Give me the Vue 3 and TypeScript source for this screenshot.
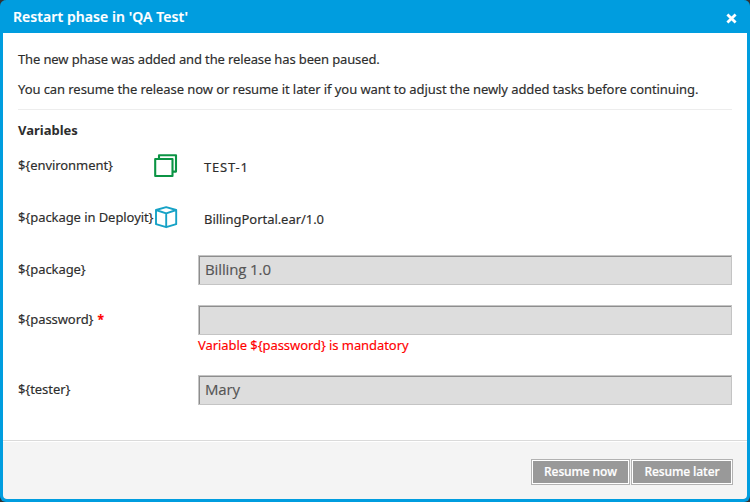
<script setup lang="ts">
import { ref } from 'vue'

interface Variable {
  name: string
  value: string
  kind: 'environment' | 'package' | 'text'
  required?: boolean
  error?: string
}

const variables = ref<Variable[]>([
  { name: 'environment', value: 'TEST-1', kind: 'environment' },
  { name: 'package in Deployit', value: 'BillingPortal.ear/1.0', kind: 'package' },
  { name: 'package', value: 'Billing 1.0', kind: 'text' },
  { name: 'password', value: '', kind: 'text', required: true, error: 'Variable ${password} is mandatory' },
  { name: 'tester', value: 'Mary', kind: 'text' },
])
</script>

<template>
  <section class="dialog" role="dialog">
    <header class="head">
      <h1>Restart phase in 'QA Test'</h1>
      <button class="close" aria-label="Close">
        <svg width="11" height="11" viewBox="0 0 11 11"><path d="M1.4 1.4 9.6 9.6M9.6 1.4 1.4 9.6" stroke="#fff" stroke-width="2.8" /></svg>
      </button>
    </header>
    <main class="body">
      <p class="first">The new phase was added and the release has been paused.</p>
      <p class="second">You can resume the release now or resume it later if you want to adjust the newly added tasks before continuing.</p>
      <hr />
      <h2>Variables</h2>
      <div v-for="v in variables" :key="v.name" class="row" :class="[v.kind, { invalid: v.error }]">
        <label>${{ '{' + v.name + '}' }}<b v-if="v.required">*</b></label>
        <svg v-if="v.kind === 'environment'" class="icon" width="24" height="24" viewBox="0 0 24 24" fill="none" stroke="#0b9444" stroke-width="2.1" stroke-linejoin="round">
          <path d="M5 5V1.3H22V17.6H18.5" />
          <rect x="1.2" y="5" width="17.3" height="17" />
        </svg>
        <svg v-else-if="v.kind === 'package'" class="icon" width="24" height="24" viewBox="0 0 24 24" fill="none" stroke="#16a2c6" stroke-width="1.9" stroke-linejoin="round">
          <path d="M12.2 1.2 22.2 4V18.2L12.2 21.2 2 18.2V4ZM2 4 12.2 7.4 22.2 4M12.2 7.4V21.2" />
        </svg>
        <div class="value">
          <input v-if="v.kind === 'text'" v-model="v.value" disabled />
          <span v-else>{{ v.value }}</span>
          <p v-if="v.error" class="error">{{ v.error }}</p>
        </div>
      </div>
    </main>
    <footer class="foot">
      <button class="btn now">Resume now</button>
      <button class="btn later">Resume later</button>
    </footer>
  </section>
</template>

<style>
body { margin: 0; background: #333; }
</style>

<style scoped>
.dialog {
  box-sizing: border-box;
  width: 750px;
  height: 502px;
  border: 3px solid #009ddf;
  border-top: 0;
  border-radius: 6px;
  background: #009ddf;
  display: flex;
  flex-direction: column;
  font: 13px/20px "Noto Sans", "Open Sans", sans-serif;
  color: #2d2d2d;
  -webkit-text-stroke: 0.15px currentColor;
  overflow: hidden;
}
p, h1, h2 { margin: 0; white-space: nowrap; }
.head {
  height: 33px;
  display: flex;
  justify-content: space-between;
  align-items: center;
  padding: 0 10px;
}
h1 { font-size: 14px; line-height: 20px; font-weight: 600; color: #fff; letter-spacing: 0.07px; }
.close { border: 0; padding: 4px 0 0; background: none; line-height: 0; }
.body {
  flex: 1;
  background: #fff;
  padding: 16px 15px 0;
}
.first { letter-spacing: -0.13px; }
.second { margin-top: 10px; letter-spacing: -0.075px; }
hr { border: 0; height: 1px; background: #ededed; margin: 10px 0; }
h2 { font-size: 13px; line-height: 20px; font-weight: 700; -webkit-text-stroke: 0; }
.row {
  display: grid;
  grid-template-columns: 136px 44px 1fr;
}
h2 + .row { margin-top: 15px; }
.environment { height: 52px; }
.package { height: 48px; }
.text { height: 50px; }
.invalid { height: 70px; }
label { grid-column: 1; white-space: nowrap; letter-spacing: -0.07px; }
label b { color: #f00; margin-left: 4px; font-size: 12px; font-weight: 700; }
.icon { grid-column: 2; margin-top: -1px; }
.value { grid-column: 3; }
.environment .value { padding: 2px 0 0 6px; letter-spacing: 0.8px; }
.package .value { padding: 2px 0 0 6px; letter-spacing: -0.05px; }
.text label { padding-top: 4px; }
input {
  box-sizing: border-box;
  display: block;
  width: 534px;
  height: 30px;
  padding: 0 6px 2px;
  border: 1px solid #c4c4c4;
  border-radius: 0;
  box-shadow: inset 1px 1px 0 #8d8d8d;
  background: #ddd;
  color: #555;
  font: 15px "Open Sans", sans-serif;
  letter-spacing: -0.12px;
}
.error { color: #f00; letter-spacing: -0.07px; }
.foot {
  height: 59px;
  box-sizing: border-box;
  background: #f4f4f4;
  border-top: 1px solid #dadada;
  box-shadow: inset 0 1px 0 #fff;
  border-radius: 0 0 4px 4px;
  display: flex;
  justify-content: flex-end;
  padding: 19px 15px 0 0;
  gap: 3px;
}
.btn {
  box-sizing: border-box;
  height: 24px;
  border: 1px solid #fff;
  border-radius: 0;
  background: #999;
  color: #fff;
  box-shadow: 0 0 0 1px #b2b2b2;
  font: 600 12px/20px "Open Sans", sans-serif;
  letter-spacing: -0.15px;
  padding: 0;
  white-space: nowrap;
}
.now { width: 97px; }
.later { width: 100px; }
</style>
